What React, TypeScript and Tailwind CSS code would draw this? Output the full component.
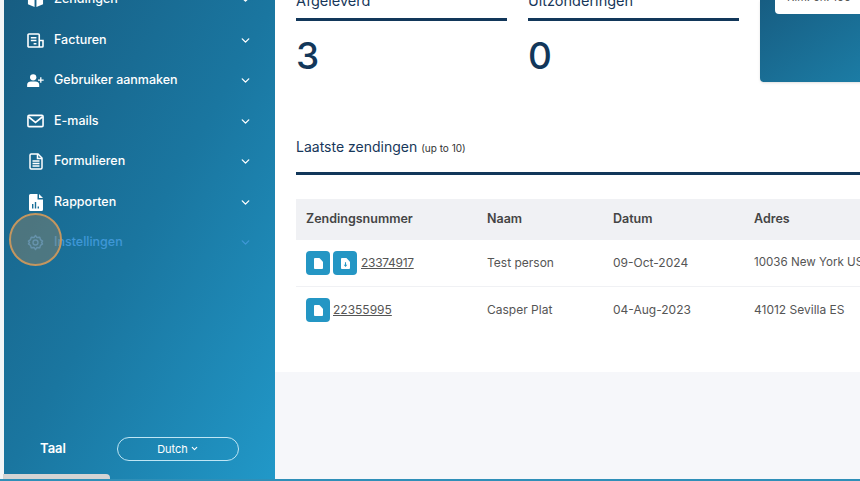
import { ChevronDown } from "lucide-react";

const menuItems = [
  { name: "Zendingen", icon: "box" },
  { name: "Facturen", icon: "invoice" },
  { name: "Gebruiker aanmaken", icon: "user" },
  { name: "E-mails", icon: "mail" },
  { name: "Formulieren", icon: "form" },
  { name: "Rapporten", icon: "report" },
  { name: "Instellingen", icon: "gear" },
];

function MenuIcon({ icon }: { icon: string }) {
  if (icon === "box") {
    return (
      <svg viewBox="0 0 18 18" className="w-[17px] h-[17px]" fill="white">
        <path d="M9 1 L17 4 L9 7 L1 4 Z" />
        <path d="M1 6 L8 8.6 V17 L1 14 Z" />
        <path d="M17 6 L10 8.6 V17 L17 14 Z" />
      </svg>
    );
  }
  if (icon === "invoice") {
    return (
      <svg viewBox="0 0 18 16" className="w-[17px] h-[15px]" fill="none" stroke="white" strokeWidth="1.7">
        <path d="M13 15 H2 a1 1 0 0 1 -1 -1 V2 a1 1 0 0 1 1 -1 H12 a1 1 0 0 1 1 1 V15 H16 a1 1 0 0 0 1 -1 V8 H13" />
        <path d="M4 5 H10 M4 8 H10 M7 11.5 H10" />
      </svg>
    );
  }
  if (icon === "user") {
    return (
      <svg viewBox="0 0 18 14" className="w-[17px] h-[13px]" fill="white">
        <circle cx="6.5" cy="3.6" r="3.4" />
        <path d="M0 14 V11.5 C0 9 2 8 4 8 H9 C11 8 13 9 13 11.5 V14 Z" />
        <path d="M14 3.5 H15.4 V5.8 H17.8 V7.2 H15.4 V9.5 H14 V7.2 H11.7 V5.8 H14 Z" />
      </svg>
    );
  }
  if (icon === "mail") {
    return (
      <svg viewBox="0 0 18 14" className="w-[17px] h-[14px]" fill="none" stroke="white" strokeWidth="1.7">
        <rect x="1" y="1" width="16" height="12" rx="1.2" />
        <path d="M1.5 2.5 L9 8.5 L16.5 2.5" />
      </svg>
    );
  }
  if (icon === "form") {
    return (
      <svg viewBox="0 0 14 17" className="w-[14px] h-[17px]" fill="none" stroke="white" strokeWidth="1.5">
        <path d="M9 1 H2.2 A1.2 1.2 0 0 0 1 2.2 V14.8 A1.2 1.2 0 0 0 2.2 16 H11.8 A1.2 1.2 0 0 0 13 14.8 V5 Z" />
        <path d="M8.5 1 V5.5 H13" />
        <path d="M3.5 8 H10.5 M3.5 10.5 H10.5 M3.5 13 H10.5" />
      </svg>
    );
  }
  if (icon === "report") {
    return (
      <svg viewBox="0 0 14 17" className="w-[14px] h-[17px]">
        <path fill="white" d="M1.5 0 H8.5 V5.5 H14 V15.5 A1.5 1.5 0 0 1 12.5 17 H1.5 A1.5 1.5 0 0 1 0 15.5 V1.5 A1.5 1.5 0 0 1 1.5 0 Z M10 0 L14 4 H10 Z" />
        <path fill="#1a6f98" d="M3 10 H4.4 V14.5 H3 Z M5.8 8 H7.2 V14.5 H5.8 Z M8.6 12.5 H10 V14.5 H8.6 Z" />
      </svg>
    );
  }
  return (
    <svg viewBox="0 0 24 24" className="w-[17px] h-[17px]" fill="none" stroke="#3f97d6" strokeWidth="2">
      <path d="M12 2 L14 5 L18 4.5 L19 8 L22 10 L20.5 12 L22 14 L19 16 L18 19.5 L14 19 L12 22 L10 19 L6 19.5 L5 16 L2 14 L3.5 12 L2 10 L5 8 L6 4.5 L10 5 Z" strokeLinejoin="round" />
      <circle cx="12" cy="12" r="3.5" />
    </svg>
  );
}

function DocButton({ download }: { download?: boolean }) {
  return (
    <div className="w-6 h-6 rounded bg-[#2496c4] flex items-center justify-center">
      <svg viewBox="0 0 10 12" className="w-[9px] h-[11px]">
        <path fill="white" d="M1 0 H6 L10 4 V11 A1 1 0 0 1 9 12 H1 A1 1 0 0 1 0 11 V1 A1 1 0 0 1 1 0 Z" />
        {download && <path fill="#2496c4" d="M4.4 4.5 H5.6 V7.5 H7 L5 10 L3 7.5 H4.4 Z" />}
      </svg>
    </div>
  );
}

function Sidebar() {
  return (
    <div className="w-[271px] h-[479px] flex flex-col shrink-0 relative bg-gradient-to-br from-[#175d82] via-[#1a76a0] to-[#2198c8]">
      <div className="flex flex-col mt-[-20.5px]">
        {menuItems.map((item, i) => {
          const active = item.icon === "gear";
          return (
            <div key={i} className="h-[40.5px] flex items-center pl-[23px] pr-[23px]">
              <div className="w-[17px] flex justify-center">
                <MenuIcon icon={item.icon} />
              </div>
              <span className={"ml-[10px] text-[12.5px] font-medium " + (active ? "text-[#3f97d6]" : "text-white")}>
                {item.name}
              </span>
              <ChevronDown
                className={"ml-auto " + (active ? "text-[#3f97d6]" : "text-white")}
                size={13}
                strokeWidth={2.5}
              />
            </div>
          );
        })}
      </div>
      <div className="mt-auto mb-[18px] flex items-center pl-[36px]">
        <span className="text-[13px] font-semibold text-white w-[77px]">Taal</span>
        <button className="w-[122px] h-[24.5px] rounded-full border border-[#bfe6f5] text-white text-[11px] flex items-center justify-center gap-0.5">
          Dutch
          <ChevronDown size={9} strokeWidth={3} />
        </button>
      </div>
      <div className="absolute left-[-1px] bottom-0 w-[107px] h-[5px] bg-[#d4d4d4] rounded-tr" />
      <div className="absolute left-[5px] top-[213px] w-[53px] h-[53px] rounded-full border-2 border-[#c4965f] bg-[#b08a5c]/35" />
    </div>
  );
}

function Stat({ label, value }: { label: string; value: string }) {
  return (
    <div className="w-[211px]">
      <div className="text-[14.5px] leading-[20px] text-[#17375a] h-[27px] border-b-[3px] border-[#12375a] box-content">
        {label}
      </div>
      <div className="text-[37px] font-medium leading-[40px] mt-[15px] text-[#12375a]">{value}</div>
    </div>
  );
}

function App() {
  return (
    <div className="w-[860px] h-[481px] overflow-hidden bg-white flex flex-col font-['Inter','Liberation_Sans',sans-serif]">
      <div className="flex h-[479px]">
        <div className="w-1 shrink-0 bg-[#f2f5f7]" />
        <Sidebar />
        <div className="flex-1 min-w-0 flex flex-col bg-[#f6f7fa] overflow-hidden">
          <div className="bg-white h-[372px] pl-[21px] shrink-0">
            <div className="flex h-[128px]">
              <div className="flex gap-[21px] shrink-0 mt-[-9px]">
                <Stat label="Afgeleverd" value="3" />
                <Stat label="Uitzonderingen" value="0" />
              </div>
              <div className="ml-[21px] w-[120px] h-[82px] rounded-bl bg-gradient-to-br from-[#175d82] to-[#1c7fa8] pl-[15px] shrink-0 shadow-sm">
                <div className="h-[14px] bg-white rounded-bl overflow-hidden pl-3">
                  <div className="text-[11px] leading-4 text-[#555] mt-[-11px]">Kim. on. 100</div>
                </div>
              </div>
            </div>
            <div className="text-[14px] text-[#17375a] leading-5 mt-[9px]">
              Laatste zendingen <span className="text-[10px] text-[#333]">(up to 10)</span>
            </div>
            <div className="h-[3px] bg-[#12375a] mt-[14px]" />
            <div className="mt-[24px] h-[41px] bg-[#f0f1f4] grid grid-cols-[181px_126px_141px_1fr] items-center pl-[10px] text-[12.5px] font-semibold text-[#444]">
              <span>Zendingsnummer</span>
              <span>Naam</span>
              <span>Datum</span>
              <span>Adres</span>
            </div>
            <div className="h-[47px] border-b border-[#f0f1f4] grid grid-cols-[181px_126px_141px_1fr] items-center pl-[10px] text-[12px] text-[#555] whitespace-nowrap">
              <div className="flex items-center gap-[3px]">
                <DocButton />
                <DocButton download />
                <span className="underline tracking-tight ml-px">23374917</span>
              </div>
              <span>Test person</span>
              <span>09-Oct-2024</span>
              <span className="text-[11.6px]">10036 New York US</span>
            </div>
            <div className="h-[46px] grid grid-cols-[181px_126px_141px_1fr] items-center pl-[10px] text-[12px] text-[#555] whitespace-nowrap">
              <div className="flex items-center gap-[3px]">
                <DocButton />
                <span className="underline">22355995</span>
              </div>
              <span>Casper Plat</span>
              <span>04-Aug-2023</span>
              <span>41012 Sevilla ES</span>
            </div>
          </div>
        </div>
      </div>
      <div className="h-[2px] bg-[#2f8fb8]" />
    </div>
  );
}

export default App;
